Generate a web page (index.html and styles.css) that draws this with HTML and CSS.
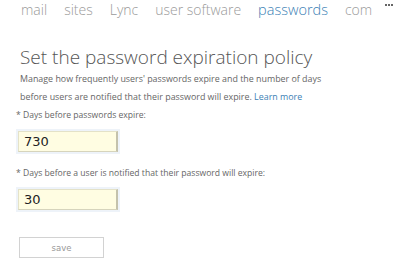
FILE: index.html
```html
<!DOCTYPE html>
<html lang="en">
<head>
    <meta charset="UTF-8">
    <title>Passwords</title>
    <link rel="stylesheet" href="styles.css">
</head>
<body>
    <nav class="tabs">
        <a href="#">mail</a>
        <a href="#">sites</a>
        <a href="#">Lync</a>
        <a href="#">user software</a>
        <a href="#" class="active">passwords</a>
        <a href="#">com</a>
        <span class="more"><i></i><i></i><i></i></span>
    </nav>

    <div class="content">
        <h1>Set the password expiration policy</h1>
        <p class="desc">Manage how frequently users' passwords expire and the number of days before users are notified that their password will expire. <a href="#">Learn more</a></p>

        <form>
            <label for="expire">* Days before passwords expire:</label>
            <div class="field"><input type="text" id="expire" value="730"></div>

            <label for="notify">* Days before a user is notified that their password will expire:</label>
            <div class="field"><input type="text" id="notify" value="30"></div>

            <button type="button" class="save">save</button>
        </form>
    </div>
</body>
</html>
```

FILE: styles.css
```css
body {
    margin: 0;
    font-family: 'Open Sans', 'Noto Sans', sans-serif;
    background-color: #fff;
    color: #444;
}

.tabs {
    display: flex;
    align-items: baseline;
    gap: 17px;
    padding: 0 0 0 21px;
    height: 20px;
    white-space: nowrap;
    overflow: hidden;
}

.tabs a {
    color: #9a9a9a;
    text-decoration: none;
    font-size: 14px;
    font-weight: 300;
    line-height: 20px;
}

.tabs a.active {
    color: #3c7fb5;
    font-size: 14.5px;
}

.tabs .more {
    display: flex;
    gap: 1px;
    align-self: flex-start;
    margin: 4px 0 0 -4px;
}

.tabs .more i {
    display: block;
    width: 2px;
    height: 2px;
    background-color: #666;
}

.content {
    padding: 24px 20px 0 20px;
}

h1 {
    margin: 0;
    font-size: 19px;
    font-weight: 300;
    color: #555;
    line-height: 26px;
}

.desc {
    margin: 0;
    font-size: 8.9px;
    line-height: 18px;
    color: #666;
    width: 318px;
}

.desc a {
    color: #3c7fb5;
    text-decoration: none;
}

form {
    margin-left: -4px;
}

form label {
    display: block;
    font-size: 8.6px;
    color: #666;
    margin-top: 13px;
    line-height: 12px;
}

form label:first-child {
    margin-top: 3px;
}

.field {
    margin: 8px 0 0 0;
    width: 100px;
    padding: 2px;
    background-color: #eef3f9;
}

.field input {
    display: block;
    box-sizing: border-box;
    width: 100%;
    height: 21px;
    border: 1px solid #e4e2c8;
    border-right: 2px solid #c4c2ac;
    border-bottom: 1px solid #d6d4bc;
    background-color: #fffde2;
    font-family: 'DejaVu Sans', sans-serif;
    font-size: 13px;
    color: #222;
    padding: 0 0 0 5px;
    outline: none;
}

.save {
    display: block;
    margin: 25px 0 0 3px;
    width: 85px;
    height: 21px;
    background-color: #fff;
    border: 1px solid #d2d2d2;
    font-family: 'DejaVu Sans', sans-serif;
    font-size: 8.5px;
    color: #999;
    cursor: pointer;
}
```
